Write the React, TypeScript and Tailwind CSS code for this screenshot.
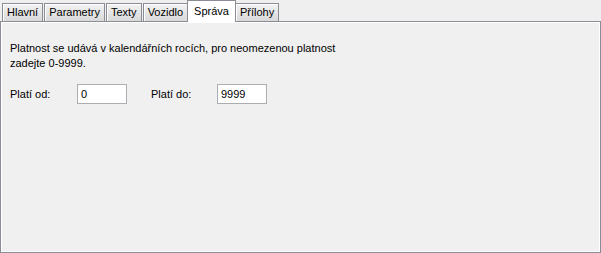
const tabs = ["Hlavní", "Parametry", "Texty", "Vozidlo", "Správa", "Přílohy"];
const active = "Správa";

function Tab({ label }: { label: string }) {
  if (label === active) {
    return (
      <div className="relative z-10 -mb-px -mx-[2px] h-[22px] px-[6px] pt-[2px] bg-white border border-b-0 border-[#8a8d96] text-[11px] leading-[16px] text-black">
        {label}
      </div>
    );
  }
  return (
    <div className="h-[18px] px-[4px] border border-b-0 border-[#8a8d96] bg-gradient-to-b from-[#f2f2f2] to-[#d9d9d9] shadow-[inset_1px_1px_0_#fff] text-[11px] leading-[16px] text-black">
      {label}
    </div>
  );
}

function Field({ label, value, gap }: { label: string; value: string; gap: string }) {
  return (
    <div className="flex items-center">
      <span className={gap}>{label}</span>
      <div className="w-[50px] h-[20px] border border-[#abadb3] bg-white pl-[3px] leading-[18px]">{value}</div>
    </div>
  );
}

export default function App() {
  return (
    <div
      className="w-[601px] h-[253px] bg-[#efefef] flex flex-col text-[11px] text-black"
      style={{ fontFamily: "Tahoma, 'Liberation Sans', Arial, sans-serif" }}
    >
      <div className="flex items-end h-[21px] pl-[2px] gap-px">
        {tabs.map((t) => (
          <Tab key={t} label={t} />
        ))}
      </div>
      <div className="flex-1 border border-[#8a8d96] bg-[#f0f0f0] shadow-[inset_1px_1px_0_#fff,inset_-1px_-1px_0_#fff] pl-[9px] pt-[19px]">
        <p className="leading-[15px] w-[360px]">
          Platnost se udává v kalendářních rocích, pro neomezenou platnost zadejte 0-9999.
        </p>
        <div className="flex items-center mt-[13px] gap-[24px]">
          <Field label="Platí od:" value="0" gap="w-[67px]" />
          <Field label="Platí do:" value="9999" gap="w-[66px]" />
        </div>
      </div>
    </div>
  );
}
